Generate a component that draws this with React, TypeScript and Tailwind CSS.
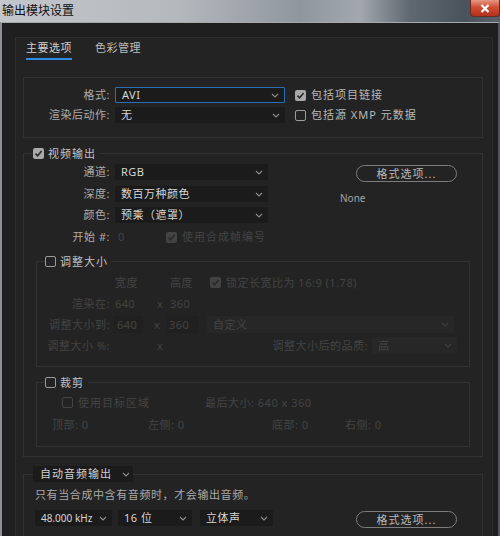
import React from "react";

const FONT = { fontFamily: '"Noto Sans", "Noto Sans CJK SC", sans-serif' };

function Chevron({ dim = false }: { dim?: boolean }) {
  return (
    <svg width="8" height="5" viewBox="0 0 8 5" className="shrink-0">
      <polyline
        points="1,1 4,4 7,1"
        fill="none"
        stroke={dim ? "#3e3e3e" : "#8e8e8e"}
        strokeWidth="1.1"
      />
    </svg>
  );
}

function Cb({ checked = false, dim = false }: { checked?: boolean; dim?: boolean }) {
  if (checked) {
    return (
      <div
        className={`w-[11px] h-[11px] rounded-[2px] shrink-0 flex items-center justify-center ${
          dim ? "bg-[#434343]" : "bg-[#a9a9a9]"
        }`}
      >
        <svg width="9" height="9" viewBox="0 0 9 9">
          <polyline
            points="1.5,4.6 3.6,6.8 7.6,2"
            fill="none"
            stroke="#2a2a2a"
            strokeWidth="1.6"
          />
        </svg>
      </div>
    );
  }
  return (
    <div
      className={`w-[11px] h-[11px] rounded-[2px] shrink-0 border-[1.5px] ${
        dim ? "border-[#434343]" : "border-[#9b9b9b]"
      }`}
    />
  );
}

function Sel({
  text,
  w,
  focus = false,
  dim = false,
  h = "h-[16px]",
  small = false,
}: {
  text: string;
  w: string;
  focus?: boolean;
  dim?: boolean;
  h?: string;
  small?: boolean;
}) {
  return (
    <div
      className={`${w} ${h} shrink-0 flex items-center justify-between pl-[6px] pr-[5px] rounded-[1px] ${
        focus ? "border border-[#2c6fb5] bg-[#1b1b1b]" : dim ? "bg-[#272727]" : "bg-[#1b1b1b]"
      }`}
    >
      <span
        className={`whitespace-nowrap ${small ? "text-[10px] tracking-[0px]" : "text-[11px] tracking-[0.5px]"} leading-[14px] ${
          dim ? "text-[#434343]" : "text-[#d6d6d6]"
        }`}
      >
        {text}
      </span>
      <Chevron dim={dim} />
    </div>
  );
}

function Pill({ text }: { text: string }) {
  return (
    <div className="w-[101px] h-[17px] shrink-0 rounded-full border-[1.5px] border-[#7d7d7d] flex items-center justify-center">
      <span className="whitespace-nowrap text-[11px] leading-[13px] tracking-[1px] text-[#b9b9b9]">{text}</span>
    </div>
  );
}

const lbl = "whitespace-nowrap text-[11px] leading-[14px] tracking-[0.5px] text-[#ababab]";
const dimT = "whitespace-nowrap text-[11px] leading-[14px] tracking-[0.5px] text-[#434343]";

export default function App() {
  return (
    <div className="w-[500px] h-[536px] overflow-hidden flex flex-col" style={FONT}>
      {/* title bar */}
      <div className="h-[22px] shrink-0 flex items-start justify-between bg-[linear-gradient(90deg,#c3c7cb_0%,#b4b9be_35%,#8f969d_60%,#a2a8ae_72%,#5f6770_82%,#4a525b_93%,#59616a_100%)]">
        <span className="ml-[2px] mt-[4px] whitespace-nowrap text-[12px] leading-[14px] text-[#111]">输出模块设置</span>
        <div className="w-[30px] h-[17px] rounded-b-[4px] border border-t-0 border-[#6b2a1f] bg-[linear-gradient(180deg,#e49884_0%,#cf4d33_45%,#b3321c_100%)] flex items-center justify-center">
          <svg width="10" height="9" viewBox="0 0 10 9">
            <path d="M1.5 1 L8.5 8 M8.5 1 L1.5 8" stroke="#ffffff" strokeWidth="2.2" />
          </svg>
        </div>
      </div>

      {/* body */}
      <div className="flex-1 min-h-0 bg-[#1f1f1f] border-t border-t-[#a4a9ae] border-l-2 border-l-[#8d9196] border-r-2 border-r-[#4f555c] pt-[14px] pl-[13px] pr-[5px]">
        <div className="border border-[#2e2e2e] bg-[#232323] h-[600px]">
          {/* tabs */}
          <div className="flex pl-[10px] gap-[23px]">
            <div className="flex flex-col">
              <span className="pt-[3px] whitespace-nowrap text-[11px] leading-[14px] tracking-[0.5px] text-[#d0d0d0]">主要选项</span>
              <div className="mt-[3px] h-[2px] bg-[#2d8ae6]" />
            </div>
            <div className="flex flex-col">
              <span className="pt-[3px] whitespace-nowrap text-[11px] leading-[14px] tracking-[0.5px] text-[#bdbdbd]">色彩管理</span>
            </div>
          </div>

          {/* format group */}
          <div className="mt-[17px] ml-[7px] mr-[9px] border border-[#323232] pt-[9px] pb-[14px] flex flex-col gap-[4px]">
            <div className="flex items-center h-[16px]">
              <span className={`w-[86px] text-right ${lbl}`}>格式:</span>
              <div className="ml-[5px]">
                <Sel text="AVI" w="w-[170px]" focus />
              </div>
              <div className="ml-[10px]">
                <Cb checked />
              </div>
              <span className="ml-[5px] whitespace-nowrap text-[11px] leading-[14px] tracking-[1px] text-[#b8b8b8]">包括项目链接</span>
            </div>
            <div className="flex items-center h-[16px]">
              <span className={`w-[86px] text-right ${lbl}`}>渲染后动作:</span>
              <div className="ml-[5px]">
                <Sel text="无" w="w-[170px]" />
              </div>
              <div className="ml-[10px]">
                <Cb />
              </div>
              <span className="ml-[5px] whitespace-nowrap text-[11px] leading-[14px] tracking-[1px] text-[#b8b8b8]">包括源 XMP 元数据</span>
            </div>
          </div>

          {/* video group */}
          <div className="mt-[15px] ml-[7px] mr-[9px] border border-[#323232] pb-[9px]">
            <div className="-mt-[7px] ml-[9px] w-fit h-[13px] flex items-center bg-[#232323] pr-[4px]">
              <Cb checked />
              <span className="ml-[4px] whitespace-nowrap text-[11px] leading-[13px] tracking-[1px] text-[#c2c2c2]">视频输出</span>
            </div>

            <div className="mt-[4px] flex">
              <div className="w-[316px] flex flex-col">
                <div className="flex items-center h-[16px]">
                  <span className={`w-[86px] text-right ${lbl}`}>通道:</span>
                  <div className="ml-[5px]">
                    <Sel text="RGB" w="w-[153px]" />
                  </div>
                </div>
                <div className="mt-[6px] flex items-center h-[16px]">
                  <span className={`w-[86px] text-right ${lbl}`}>深度:</span>
                  <div className="ml-[5px]">
                    <Sel text="数百万种颜色" w="w-[153px]" />
                  </div>
                </div>
                <div className="mt-[5px] flex items-center h-[16px]">
                  <span className={`w-[86px] text-right ${lbl}`}>颜色:</span>
                  <div className="ml-[5px]">
                    <Sel text="预乘（遮罩）" w="w-[153px]" />
                  </div>
                </div>
                <div className="mt-[6px] flex items-center h-[16px]">
                  <span className={`w-[86px] text-right ${lbl}`}>开始 #:</span>
                  <span className={`ml-[8px] w-[48px] ${dimT}`}>0</span>
                  <Cb checked dim />
                  <span className={`ml-[5px] ${dimT} tracking-[1px]`}>使用合成帧编号</span>
                </div>
              </div>
              <div className="flex flex-col">
                <div className="ml-[16px] mt-[1px]">
                  <Pill text="格式选项..." />
                </div>
                <span className="mt-[10px] whitespace-nowrap text-[10px] leading-[12px] text-[#a3a3a3]">None</span>
              </div>
            </div>

            {/* resize group */}
            <div className="mt-[16px] ml-[12px] mr-[12px] border border-[#323232] pb-[12px]">
              <div className="-mt-[7px] ml-[8px] w-fit h-[13px] flex items-center bg-[#232323] pr-[4px]">
                <Cb />
                <span className="ml-[4px] whitespace-nowrap text-[11px] leading-[13px] tracking-[1px] text-[#c2c2c2]">调整大小</span>
              </div>
              <div className="mt-[6px] flex flex-col gap-[4px]">
                <div className="flex items-center h-[17px]">
                  <span className="w-[73px]" />
                  <span className={`ml-[5px] w-[42px] ${dimT}`}>宽度</span>
                  <span className="w-[13px]" />
                  <span className={`w-[40px] ${dimT}`}>高度</span>
                  <Cb checked dim />
                  <span className={`ml-[5px] ${dimT}`}>锁定长宽比为 16:9 (1.78)</span>
                </div>
                <div className="flex items-center h-[17px]">
                  <span className={`w-[73px] text-right ${dimT}`}>渲染在:</span>
                  <span className={`ml-[5px] w-[42px] ${dimT}`}>640</span>
                  <span className={`w-[13px] ${dimT}`}>x</span>
                  <span className={`w-[40px] ${dimT}`}>360</span>
                </div>
                <div className="flex items-center h-[17px]">
                  <span className={`w-[73px] text-right ${dimT}`}>调整大小到:</span>
                  <div className="ml-[3px] w-[30px] h-[17px] bg-[#202020] flex items-center pl-[4px]">
                    <span className={dimT}>640</span>
                  </div>
                  <span className="w-[11px]" />
                  <span className={`w-[13px] ${dimT}`}>x</span>
                  <div className="w-[32px] h-[17px] bg-[#202020] flex items-center pl-[2px]">
                    <span className={dimT}>360</span>
                  </div>
                  <span className="w-[8px]" />
                  <Sel text="自定义" w="w-[247px]" h="h-[17px]" dim />
                </div>
                <div className="flex items-center h-[17px]">
                  <span className={`w-[73px] text-right ${dimT}`}>调整大小 %:</span>
                  <span className="ml-[5px] w-[42px]" />
                  <span className={`w-[13px] ${dimT}`}>x</span>
                  <span className="w-[40px]" />
                  <span className={`w-[158px] text-right ${dimT}`}>调整大小后的品质:</span>
                  <div className="ml-[4px]">
                    <Sel text="高" w="w-[85px]" h="h-[17px]" dim />
                  </div>
                </div>
              </div>
            </div>

            {/* crop group */}
            <div className="mt-[15px] ml-[12px] mr-[12px] border border-[#323232] pb-[13px]">
              <div className="-mt-[7px] ml-[8px] w-fit h-[13px] flex items-center bg-[#232323] pr-[4px]">
                <Cb />
                <span className="ml-[4px] whitespace-nowrap text-[11px] leading-[13px] tracking-[1px] text-[#c2c2c2]">裁剪</span>
              </div>
              <div className="mt-[5px] flex items-center h-[17px] pl-[25px]">
                <Cb dim />
                <span className={`ml-[5px] w-[127px] ${dimT} tracking-[1px]`}>使用目标区域</span>
                <span className={dimT}>最后大小: 640 x 360</span>
              </div>
              <div className="mt-[5px] flex items-center h-[17px] pl-[15px]">
                <span className={`w-[96px] ${dimT}`}>顶部: 0</span>
                <span className={`w-[124px] ${dimT}`}>左侧: 0</span>
                <span className={`w-[73px] ${dimT}`}>底部: 0</span>
                <span className={dimT}>右侧: 0</span>
              </div>
            </div>
          </div>

          {/* audio group */}
          <div className="mt-[17px] ml-[7px] mr-[9px] border border-[#323232] h-[120px]">
            <div className="-mt-[9px] ml-[9px] w-[100px] h-[16px] bg-[#1b1b1b] flex items-center justify-between pl-[7px] pr-[3px]">
              <span className="whitespace-nowrap text-[11px] leading-[14px] tracking-[1px] text-[#cfcfcf]">自动音频输出</span>
              <Chevron />
            </div>
            <div className="mt-[6px] pl-[11px] flex">
              <span className="whitespace-nowrap text-[11px] leading-[14px] tracking-[0.6px] text-[#a9a9a9]">
                只有当合成中含有音频时，才会输出音频。
              </span>
            </div>
            <div className="mt-[8px] pl-[11px] flex items-start">
              <Sel text="48.000 kHz" w="w-[77px]" small />
              <div className="ml-[6px]">
                <Sel text="16 位" w="w-[74px]" />
              </div>
              <div className="ml-[8px]">
                <Sel text="立体声" w="w-[73px]" />
              </div>
              <div className="ml-[83px] mt-[1px]">
                <Pill text="格式选项..." />
              </div>
            </div>
          </div>
        </div>
      </div>
    </div>
  );
}
